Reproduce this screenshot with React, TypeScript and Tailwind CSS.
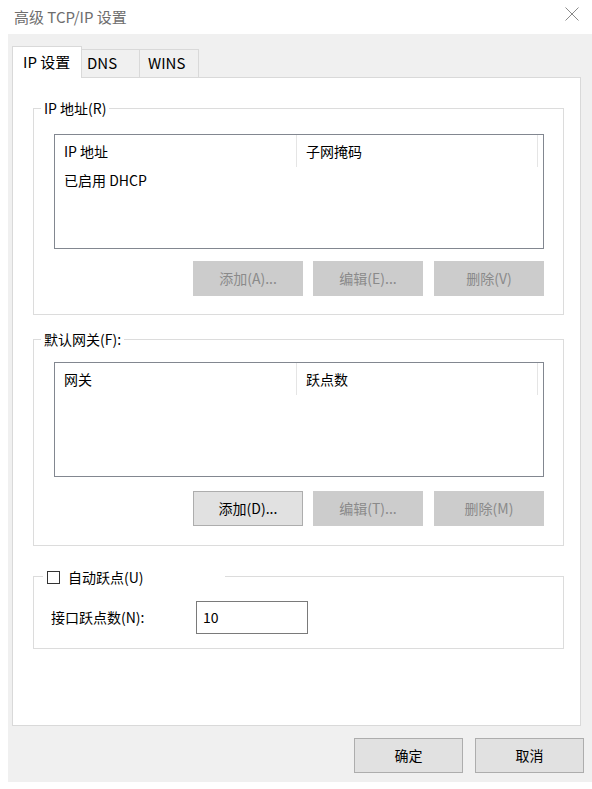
import React from 'react';

const FONT = { fontFamily: '"Noto Sans CJK SC", "Noto Sans", sans-serif' };

const Btn: React.FC<{ label: string; disabled?: boolean; w?: string }> = ({ label, disabled, w = 'w-[110px]' }) => (
  <div
    className={`${w} h-[35px] flex items-center justify-center text-[14px] border ${
      disabled ? 'bg-[#cccccc] border-[#cccccc] text-[#8a8a8a]' : 'bg-[#e1e1e1] border-[#adadad] text-black'
    }`}
  >
    {label}
  </div>
);

const ListBox: React.FC<{ cols: [string, string]; rows?: string[] }> = ({ cols, rows = [] }) => (
  <div className="w-[490px] h-[115px] border border-[#828790] bg-white text-[14px] text-black">
    <div className="flex h-[32px]">
      <div className="w-[242px] border-r border-[#e5e5e5] pl-[9px] flex items-center">{cols[0]}</div>
      <div className="w-[241px] border-r border-[#e5e5e5] pl-[9px] flex items-center">{cols[1]}</div>
    </div>
    {rows.map(r => (
      <div key={r} className="h-[26px] pl-[9px] flex items-center">{r}</div>
    ))}
  </div>
);

const App: React.FC = () => {
  return (
    <div className="w-[592px] h-[789px] bg-white overflow-hidden" style={FONT}>
      {/* title bar */}
      <div className="h-[34px] flex items-center justify-between pl-[14px] pr-[13px]">
        <span className="text-[15px] text-[#6e6e6e]">高级 TCP/IP 设置</span>
        <svg width="14" height="14" viewBox="0 0 14 14" className="mt-[-6px]">
          <path d="M0.5 0.5 L13.5 13.5 M13.5 0.5 L0.5 13.5" stroke="#8a8a8a" strokeWidth="1" fill="none" />
        </svg>
      </div>

      {/* body */}
      <div className="ml-[8px] w-[584px] h-[748px] bg-[#f0f0f0] pt-[12px] pl-[4px]">
        {/* tabs */}
        <div className="flex items-end h-[31px] text-[15px] text-black">
          <div className="relative z-10 w-[70px] h-[32px] -mb-px bg-white border border-b-0 border-[#d9d9d9] pl-[10px] flex items-center">
            IP 设置
          </div>
          <div className="w-[58px] h-[28px] border border-l-0 border-b-0 border-[#d9d9d9] pl-[5px] flex items-center">DNS</div>
          <div className="w-[59px] h-[28px] border border-l-0 border-b-0 border-[#d9d9d9] pl-[8px] flex items-center">WINS</div>
        </div>

        {/* panel */}
        <div className="w-[569px] h-[649px] bg-white border border-[#d9d9d9] pt-[30px] pl-[20px] text-black">
          {/* IP addresses */}
          <div className="relative w-[531px] h-[207px] border border-[#dcdcdc] pt-[25px] pl-[20px]">
            <span className="absolute left-[7px] top-[-11px] px-[3px] bg-white text-[14px] leading-[20px]">IP 地址(R)</span>
            <ListBox cols={['IP 地址', '子网掩码']} rows={['已启用 DHCP']} />
            <div className="w-[490px] flex justify-end mt-[12px]">
              <Btn label="添加(A)..." disabled />
              <div className="w-[10px]" />
              <Btn label="编辑(E)..." disabled />
              <div className="w-[11px]" />
              <Btn label="删除(V)" disabled />
            </div>
          </div>

          {/* gateways */}
          <div className="relative mt-[24px] w-[531px] h-[207px] border border-[#dcdcdc] pt-[22px] pl-[20px]">
            <span className="absolute left-[7px] top-[-11px] px-[3px] bg-white text-[14px] leading-[20px]">默认网关(F):</span>
            <ListBox cols={['网关', '跃点数']} />
            <div className="w-[490px] flex justify-end mt-[14px]">
              <Btn label="添加(D)..." />
              <div className="w-[10px]" />
              <Btn label="编辑(T)..." disabled />
              <div className="w-[11px]" />
              <Btn label="删除(M)" disabled />
            </div>
          </div>

          {/* metric */}
          <div className="relative mt-[30px] w-[531px] h-[73px] border border-[#dcdcdc] pl-[17px] pt-[24px]">
            <div className="absolute left-[9px] top-[-11px] w-[182px] h-[22px] bg-white flex items-center pl-[4px] text-[14px]">
              <span className="w-[13px] h-[13px] border border-[#333333] bg-white" />
              <span className="ml-[8px]">自动跃点(U)</span>
            </div>
            <div className="flex items-center text-[14px]">
              <span className="w-[145px]">接口跃点数(N):</span>
              <div className="w-[112px] h-[33px] border border-[#7a7a7a] pl-[6px] flex items-center">10</div>
            </div>
          </div>
        </div>

        {/* dialog buttons */}
        <div className="flex justify-end mt-[12px] pr-[8px] gap-[12px]">
          <Btn label="确定" w="w-[109px]" />
          <Btn label="取消" w="w-[109px]" />
        </div>
      </div>
    </div>
  );
};

export default App;
